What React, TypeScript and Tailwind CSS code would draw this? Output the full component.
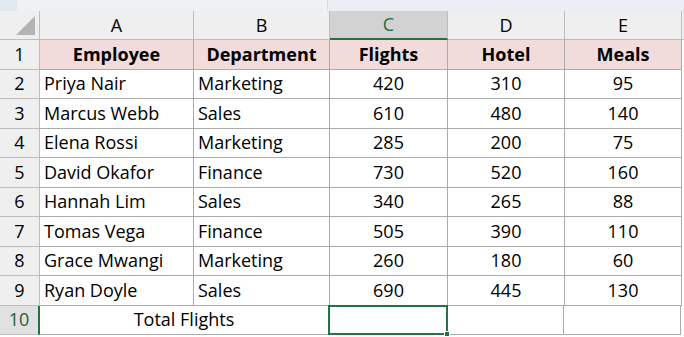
import React from "react";

const cols = ["A", "B", "C", "D", "E"];
const widths = ["w-[154px]", "w-[136px]", "w-[118px]", "w-[117px]", "w-[117px]"];

const data: [string, string, string, string, string][] = [
  ["Priya Nair", "Marketing", "420", "310", "95"],
  ["Marcus Webb", "Sales", "610", "480", "140"],
  ["Elena Rossi", "Marketing", "285", "200", "75"],
  ["David Okafor", "Finance", "730", "520", "160"],
  ["Hannah Lim", "Sales", "340", "265", "88"],
  ["Tomas Vega", "Finance", "505", "390", "110"],
  ["Grace Mwangi", "Marketing", "260", "180", "60"],
  ["Ryan Doyle", "Sales", "690", "445", "130"],
];

const headers = ["Employee", "Department", "Flights", "Hotel", "Meals"];

export default function App() {
  return (
    <div
      className="w-[684px] h-[337px] bg-white overflow-hidden text-[18px] text-black"
      style={{ fontFamily: "'Open Sans', Lato, sans-serif" }}
    >
      {/* top strip */}
      <div className="flex h-[11px] bg-[#e6eaef]">
        <div className="w-[17px] bg-[#e3e8ee]" />
        <div className="w-[311px] bg-[#eef1f4] border-r border-[#d6dbe1]" />
        <div className="flex-1 bg-[#eaeef2]" />
      </div>

      {/* column headers */}
      <div className="flex h-[29px]">
        <div className="w-[40px] h-full bg-[#efefef] border-r border-b border-[#bdbdbd] relative">
          <div
            className="absolute right-[4px] bottom-[4px] w-[19px] h-[19px] bg-[#b4b4b4]"
            style={{ clipPath: "polygon(100% 0, 100% 100%, 0 100%)" }}
          />
        </div>
        {cols.map((c, i) => (
          <div
            key={c}
            className={`${widths[i]} h-full flex items-center justify-center border-r ${
              c === "C"
                ? "bg-[#d2d2d2] text-[#1d6b41] border-b-2 border-b-[#217346] border-r-[#bdbdbd]"
                : "bg-[#efefef] border-b border-[#bdbdbd]"
            }`}
          >
            {c}
          </div>
        ))}
        <div className="flex-1 h-full bg-[#efefef] border-b border-[#bdbdbd]" />
      </div>

      {/* row 1 header */}
      <div className="flex h-[29.5px]">
        <div className="w-[40px] h-full bg-[#efefef] border-r border-b border-[#bdbdbd] flex items-center justify-center">
          1
        </div>
        {headers.map((h, i) => (
          <div
            key={h}
            className={`${widths[i]} h-full flex items-center justify-center font-bold bg-[#f2dcdb] border-r border-b border-[#ababab]`}
          >
            {h}
          </div>
        ))}
      </div>

      {data.map((r, ri) => (
        <div key={ri} className="flex h-[29.5px]">
          <div className="w-[40px] h-full bg-[#efefef] border-r border-b border-[#bdbdbd] flex items-center justify-center">
            {ri + 2}
          </div>
          {r.map((v, i) => (
            <div
              key={i}
              className={`${widths[i]} h-full flex items-center border-r border-b border-[#ababab] ${
                i < 2 ? "justify-start pl-[4px]" : "justify-center"
              }`}
            >
              {v}
            </div>
          ))}
        </div>
      ))}

      {/* row 10 */}
      <div className="flex h-[29.5px]">
        <div className="w-[40px] h-full bg-[#e1e1e1] border-r-2 border-r-[#217346] border-b border-b-[#bdbdbd] flex items-center justify-center text-[#1d5e3c]">
          10
        </div>
        <div className="w-[289px] h-full flex items-center justify-center border-r border-b border-[#ababab]">
          Total Flights
        </div>
        <div className="w-[118px] h-full border-b border-[#ababab] relative">
          <div className="absolute -left-[1px] -top-[1px] right-[-1px] bottom-[-1px] border-2 border-[#217346]" />
          <div className="absolute right-[-3px] bottom-[-3px] w-[6px] h-[6px] bg-[#217346] border border-white" />
        </div>
        <div className="w-[117px] h-full border-r border-b border-[#ababab]" />
        <div className="w-[117px] h-full border-r border-b border-[#ababab]" />
      </div>
    </div>
  );
}
